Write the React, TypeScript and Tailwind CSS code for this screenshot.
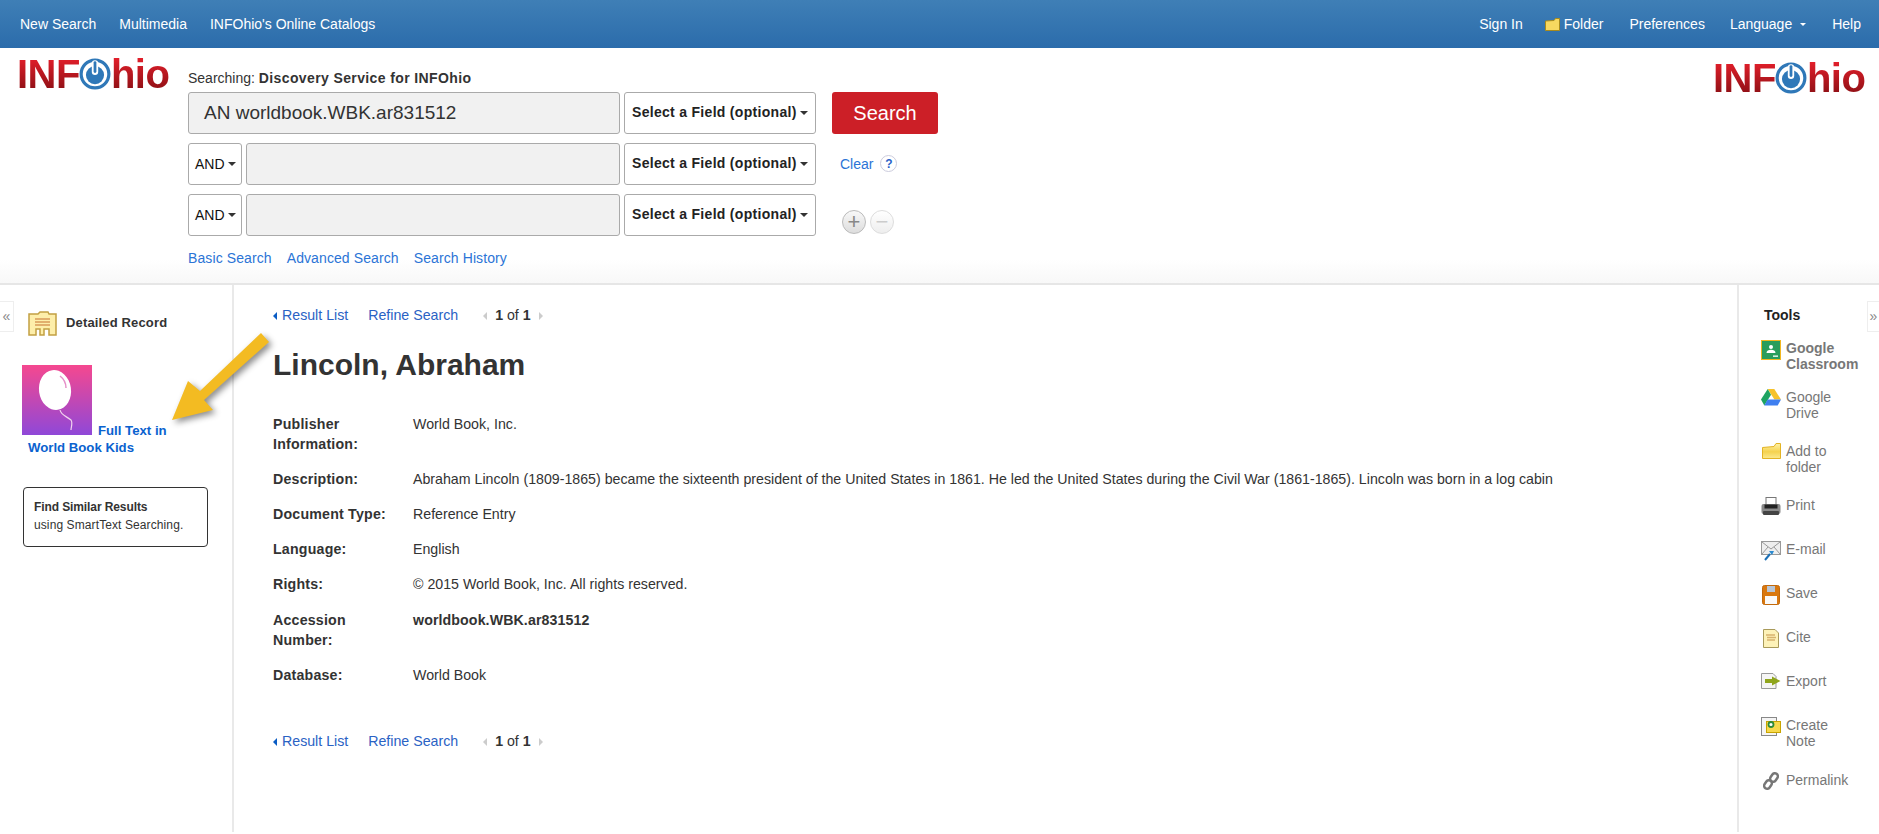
import React from 'react';

const Caret = ({ className = 'border-t-[#333]' }: { className?: string }) => (
  <span className={`inline-block w-0 h-0 border-x-[4px] border-t-[4px] border-x-transparent ${className}`} />
);

const Logo = () => (
  <div className="flex items-center h-[36px] w-[152px] text-[40px] leading-[36px] font-bold select-none">
    <span className="bg-linear-to-b from-[#e8202c] to-[#8a0f14] bg-clip-text text-transparent tracking-[-0.5px]">INF</span>
    <svg width="32" height="32" viewBox="0 0 30 30" className="shrink-0 -ml-[1px]">
      <circle cx="15" cy="15" r="13" fill="#fff" stroke="#2f78b8" strokeWidth="3" />
      <circle cx="15" cy="16" r="8.5" fill="#2f78b8" />
      <rect x="12" y="2" width="6" height="14" rx="3" fill="#fff" />
      <rect x="13.7" y="3" width="2.6" height="11" rx="1.3" fill="#2f78b8" />
    </svg>
    <span className="bg-linear-to-b from-[#e8202c] to-[#8a0f14] bg-clip-text text-transparent tracking-[-0.5px]">hio</span>
  </div>
);

const FieldSelect = () => (
  <button className="w-[192px] h-[42px] bg-white border border-[#aaa] rounded-[3px] flex items-center justify-between pl-[7px] pr-[7px] pb-[1px] text-[14px] tracking-[0.3px] font-bold text-[#222]">
    <span>Select a Field (optional)</span>
    <Caret />
  </button>
);

const AndSelect = () => (
  <button className="w-[54px] h-[42px] bg-white border border-[#aaa] rounded-[3px] flex items-center gap-[3px] pl-[6px] text-[14px] text-[#111]">
    <span>AND</span>
    <Caret />
  </button>
);

const TextBox = ({ value, wide }: { value?: string; wide?: boolean }) => (
  <div className={`${wide ? 'w-[432px] pl-[15px]' : 'w-[374px]'} h-[42px] bg-[#f1f1f1] border border-[#aaa] rounded-[3px] flex items-center text-[19px] text-[#333]`}>
    {value}
  </div>
);

const ResultNav = () => (
  <div className="flex items-center text-[14.2px] h-[20px]">
    <span className="inline-block w-0 h-0 border-y-[4px] border-r-[4px] border-y-transparent border-r-[#0a5cc4] mr-[5px]" />
    <a className="text-[#2a62c4]">Result List</a>
    <a className="text-[#2a62c4] ml-[20px]">Refine Search</a>
    <span className="inline-block w-0 h-0 border-y-[4px] border-r-[4px] border-y-transparent border-r-[#ccc] ml-[25px]" />
    <span className="ml-[8px] text-[#333]"><b>1</b> of <b>1</b></span>
    <span className="inline-block w-0 h-0 border-y-[4px] border-l-[4px] border-y-transparent border-l-[#ccc] ml-[8px]" />
  </div>
);

const details = [
  { label: ['Publisher', 'Information:'], value: 'World Book, Inc.', cls: 'mt-0' },
  {
    label: ['Description:'],
    value:
      'Abraham Lincoln (1809-1865) became the sixteenth president of the United States in 1861. He led the United States during the Civil War (1861-1865). Lincoln was born in a log cabin',
    cls: 'mt-[15px]',
  },
  { label: ['Document Type:'], value: 'Reference Entry', cls: 'mt-[15px]' },
  { label: ['Language:'], value: 'English', cls: 'mt-[15px]' },
  { label: ['Rights:'], value: '© 2015 World Book, Inc. All rights reserved.', cls: 'mt-[15px]' },
  { label: ['Accession', 'Number:'], value: 'worldbook.WBK.ar831512', bold: true, cls: 'mt-[16px]' },
  { label: ['Database:'], value: 'World Book', cls: 'mt-[15px]' },
];

const ClassroomIcon = () => (
  <svg width="20" height="20" viewBox="0 0 20 20">
    <rect x="0.5" y="0.5" width="19" height="19" fill="#2a9d5c" stroke="#f2b71f" />
    <circle cx="10" cy="7" r="2" fill="#fff" />
    <path d="M5.5 13c0-2.5 2-3.3 4.500-3.300s4.500.8 4.500 3.300z" fill="#fff" />
    <rect x="12" y="15.500" width="5" height="1.300" fill="#fff" />
  </svg>
);
const DriveIcon = () => (
  <svg width="20" height="17" viewBox="0 0 20 17">
    <path d="M6.700 0h6.600l6.700 10.500h-6.600z" fill="#f6c22c" />
    <path d="M6.700 0L0 10.500l3.300 6 6.700-10.800z" fill="#1ea362" />
    <path d="M6.600 10.500H20l-3.300 6H3.300z" fill="#3f7ff0" />
  </svg>
);
const FolderIcon = ({ w = 19, h = 16 }: { w?: number; h?: number }) => (
  <svg width={w} height={h} viewBox="0 0 19 16">
    <defs>
      <linearGradient id="fold" x1="0" y1="0" x2="0" y2="1">
        <stop offset="0" stopColor="#fff2a8" />
        <stop offset="0.55" stopColor="#f5d24e" />
        <stop offset="1" stopColor="#fbe98e" />
      </linearGradient>
    </defs>
    <path d="M.5 15.500V4.500L12 3.500 14 .5h4.500v15z" fill="url(#fold)" stroke="#e3b324" />
  </svg>
);
const PrintIcon = () => (
  <svg width="20" height="19" viewBox="0 0 20 19">
    <rect x="5" y="0.500" width="10" height="7" fill="#fff" stroke="#777" />
    <rect x="0.500" y="7" width="19" height="10" rx="2" fill="#8a8a8a" />
    <rect x="3.500" y="7.500" width="13" height="4" fill="#222" />
    <rect x="2" y="14" width="16" height="4" rx="1" fill="#444" />
  </svg>
);
const MailIcon = () => (
  <svg width="20" height="20" viewBox="0 0 20 20">
    <rect x="0.500" y="0.500" width="19" height="13" fill="#eee" stroke="#999" />
    <path d="M1 1l9 7 9-7M1 13l6-7M19 13l-6-7" fill="none" stroke="#999" />
    <path d="M4 19l5-6" stroke="#1b6fb5" strokeWidth="2" />
    <path d="M8 10l5 0-2 4z" fill="#2b8ad0" />
  </svg>
);
const SaveIcon = () => (
  <svg width="18" height="20" viewBox="0 0 18 20">
    <rect x="0.500" y="0.500" width="17" height="19" rx="2" fill="#d9780f" stroke="#c2690c" />
    <rect x="5" y="1" width="8" height="6" fill="#b9c6d6" />
    <rect x="3" y="11" width="12" height="8" fill="#fafafa" />
  </svg>
);
const CiteIcon = () => (
  <svg width="16" height="19" viewBox="0 0 16 19">
    <path d="M.5.500H12l3.500 3.500v14.500H.5z" fill="#fdf2b8" stroke="#a89a5a" />
    <path d="M3 6h9M4 8.500h9M4 11h8" stroke="#d8b36e" strokeWidth="1.500" />
  </svg>
);
const ExportIcon = () => (
  <svg width="20" height="16" viewBox="0 0 20 16">
    <path d="M.5.500H12l3 3v12H.5z" fill="#f5f5f5" stroke="#999" />
    <path d="M4 6h7V3.500L19.500 8 11 12.500V10H4z" fill="#8fa51c" />
  </svg>
);
const NoteIcon = () => (
  <svg width="20" height="19" viewBox="0 0 20 19">
    <rect x="0.500" y="0.500" width="15" height="18" fill="#f5f5f5" stroke="#888" />
    <rect x="5.500" y="4.500" width="14" height="11" fill="#f7d94c" stroke="#c9a400" />
    <circle cx="10" cy="7.500" r="2.500" fill="#fff" stroke="#2c8a3a" strokeWidth="1.800" />
  </svg>
);
const LinkIcon = () => (
  <svg width="16" height="18" viewBox="0 0 16 18" fill="none" stroke="#777" strokeWidth="2.500">
    <rect x="8" y="1" width="6" height="9" rx="3" transform="rotate(35 11 5.500)" />
    <rect x="2" y="8" width="6" height="9" rx="3" transform="rotate(35 5 12.500)" />
  </svg>
);

const tools = [
  { icon: <ClassroomIcon />, lines: ['Google', 'Classroom'], cls: 'mt-[15px] font-bold' },
  { icon: <DriveIcon />, lines: ['Google', 'Drive'], cls: 'mt-[17px]' },
  { icon: <FolderIcon />, lines: ['Add to', 'folder'], cls: 'mt-[22px]' },
  { icon: <PrintIcon />, lines: ['Print'], cls: 'mt-[22px]' },
  { icon: <MailIcon />, lines: ['E-mail'], cls: 'mt-[28px]' },
  { icon: <SaveIcon />, lines: ['Save'], cls: 'mt-[28px]' },
  { icon: <CiteIcon />, lines: ['Cite'], cls: 'mt-[28px]' },
  { icon: <ExportIcon />, lines: ['Export'], cls: 'mt-[28px]' },
  { icon: <NoteIcon />, lines: ['Create', 'Note'], cls: 'mt-[28px]' },
  { icon: <LinkIcon />, lines: ['Permalink'], cls: 'mt-[23px]' },
];

const App: React.FC = () => {
  return (
    <div className="relative w-[1879px] h-[834px] overflow-hidden bg-white text-[14px] font-['Liberation_Sans',Arial,sans-serif]">
      {/* top bar */}
      <div className="h-[48px] bg-linear-to-b from-[#3f7fb6] to-[#2b6cab] flex items-center justify-between pl-[20px] pr-[18px] text-white text-[14px]">
        <div className="flex gap-[23px]">
          <a>New Search</a>
          <a>Multimedia</a>
          <a>INFOhio's Online Catalogs</a>
        </div>
        <div className="flex items-center gap-[24px]">
          <a className="-mr-[2px]">Sign In</a>
          <a className="flex items-center gap-[4px] mr-[2px]">
            <svg width="15" height="13" viewBox="0 0 15 13">
              <path d="M.5 12.500V3L9 2.500 10.500.5h4v12z" fill="#f6d860" stroke="#a88a1c" />
            </svg>
            Folder
          </a>
          <a className="mr-[1px]">Preferences</a>
          <a className="flex items-center gap-[8px] mr-[2px]">
            Language
            <span className="inline-block w-0 h-0 border-x-[3px] border-t-[3px] border-x-transparent border-t-white" />
          </a>
          <a>Help</a>
        </div>
      </div>

      {/* search header */}
      <div className="h-[237px] flex bg-linear-to-b from-white from-[90%] to-[#f8f8f8] border-b-2 border-[#e6e6e6]">
        <div className="w-[188px] shrink-0 pl-[17px] pt-[8px]">
          <Logo />
        </div>
        <div className="pt-[20px]">
          <div className="text-[14px] leading-[20px] text-[#333] h-[24px]">
            Searching: <b className="tracking-[0.38px]">Discovery Service for INFOhio</b>
          </div>
          <div className="flex">
            <div className="flex flex-col gap-[9px]">
              <div className="flex gap-[4px]">
                <TextBox value="AN worldbook.WBK.ar831512" wide />
                <FieldSelect />
              </div>
              <div className="flex gap-[4px]">
                <AndSelect />
                <TextBox />
                <FieldSelect />
              </div>
              <div className="flex gap-[4px]">
                <AndSelect />
                <TextBox />
                <FieldSelect />
              </div>
            </div>
            <div className="ml-[16px] flex flex-col">
              <button className="w-[106px] h-[42px] bg-[#cc1f27] rounded-[3px] text-white text-[20px]">Search</button>
              <div className="mt-[20px] ml-[8px] flex items-center gap-[7px] text-[14px] text-[#2b74d6]">
                <a>Clear</a>
                <span className="w-[17px] h-[17px] rounded-full border border-[#ccd] text-[12px] font-bold text-[#2b62c8] flex items-center justify-center -mt-[2px]">?</span>
              </div>
              <div className="mt-[35px] ml-[10px] flex gap-[4px]">
                <span className="w-[24px] h-[24px] rounded-full border border-[#bbb] bg-linear-to-b from-[#f8f8f8] to-[#ddd] text-[#888] text-[22px] leading-[20px] flex items-center justify-center">+</span>
                <span className="w-[24px] h-[24px] rounded-full border border-[#ddd] bg-linear-to-b from-white to-[#eee] text-[#ccc] text-[22px] leading-[20px] flex items-center justify-center">−</span>
              </div>
            </div>
          </div>
          <div className="mt-[12px] flex gap-[15px] text-[14px] tracking-[0.1px] text-[#2b74d6]">
            <a>Basic Search</a>
            <a>Advanced Search</a>
            <a>Search History</a>
          </div>
        </div>
        <div className="ml-auto pt-[12px] pr-[14px]">
          <Logo />
        </div>
      </div>

      {/* body */}
      <div className="flex h-[547px]">
        <aside className="w-[234px] shrink-0 border-r-2 border-[#e9e9e9]">
          <div className="flex items-center h-[26px] mt-[25px] ml-[28px]">
            <svg width="29" height="25" viewBox="0 0 29 25">
              <path d="M1 24V3h9l2-2h8l1 2h7v21h-7v-6h-5v6h-4v-6H8v6z" fill="#fdeeaa" stroke="#c2a043" strokeWidth="1.500" />
              <path d="M7 8h15M7 11h15M7 14h15" stroke="#d79a5a" strokeWidth="1.500" />
            </svg>
            <span className="ml-[9px] text-[13px] tracking-[0.15px] font-bold text-[#333]">Detailed Record</span>
          </div>
          <div className="mt-[29px] ml-[28px] w-[190px] text-[13.2px] leading-[17px] font-bold text-[#0a62cf]">
            <svg width="70" height="70" viewBox="0 0 70 70" className="inline align-baseline -ml-[6px]">
              <defs>
                <linearGradient id="bal" x1="0" y1="0" x2="0" y2="1">
                  <stop offset="0" stopColor="#f5488f" />
                  <stop offset="1" stopColor="#8f48d8" />
                </linearGradient>
              </defs>
              <rect width="70" height="70" fill="url(#bal)" />
              <ellipse cx="33" cy="25" rx="16" ry="20" transform="rotate(-8 33 25)" fill="#fff" />
              <path d="M38 11c4 3 6 7 6 12" fill="none" stroke="#e58fc8" strokeWidth="1.500" />
              <path d="M38 45c1 5 6 6 11 10 2 3 0 7 0 10" fill="none" stroke="#f1d4ee" strokeWidth="1.200" />
            </svg>
            <span className="ml-[6px]">Full Text in</span>
            <br />
            World Book Kids
          </div>
          <div className="mt-[31px] ml-[23px] w-[185px] h-[60px] border border-[#333] rounded-[4px] pl-[10px] pt-[10px] text-[12px] leading-[18px] text-[#333]">
            <b className="tracking-[-0.1px]">Find Similar Results</b>
            <br />
            <span className="tracking-[0.1px]">using SmartText Searching.</span>
          </div>
        </aside>

        <main className="flex-1 pl-[39px] pt-[21px]">
          <ResultNav />
          <h1 className="mt-[21px] text-[30px] leading-[36px] font-bold text-[#333]">Lincoln, Abraham</h1>
          <div className="mt-[31px] text-[14.2px] leading-[20px] text-[#333]">
            {details.map(d => (
              <div key={d.label[0]} className={`flex ${d.cls}`}>
                <div className="w-[140px] shrink-0 font-bold tracking-[0.2px]">
                  {d.label.map(l => (
                    <div key={l}>{l}</div>
                  ))}
                </div>
                <div className={d.bold ? 'font-bold tracking-[0.1px]' : ''}>{d.value}</div>
              </div>
            ))}
          </div>
          <div className="mt-[47px]">
            <ResultNav />
          </div>
        </main>

        <aside className="w-[142px] shrink-0 border-l-2 border-[#e9e9e9] pl-[22px] pt-[20px]">
          <div className="text-[14px] leading-[20px] font-bold text-[#222] ml-[3px]">Tools</div>
          <div className="text-[14px] leading-[16px] text-[#777]">
            {tools.map(t => (
              <div key={t.lines[0] + t.lines.length} className={`flex ${t.cls}`}>
                <div className="w-[20px] h-[16px] mr-[5px] shrink-0 flex justify-center items-start">{t.icon}</div>
                <div>
                  {t.lines.map(l => (
                    <div key={l}>{l}</div>
                  ))}
                </div>
              </div>
            ))}
          </div>
        </aside>
      </div>

      {/* collapse tabs */}
      <div className="absolute left-0 top-[301px] w-[14px] h-[31px] border border-l-0 border-[#eee] bg-white text-[#888] text-[14px] leading-[28px] text-center">«</div>
      <div className="absolute right-0 top-[301px] w-[12px] h-[31px] border border-r-0 border-[#eee] bg-white text-[#888] text-[14px] leading-[28px] text-center">»</div>

      {/* arrow annotation */}
      <svg className="absolute left-[160px] top-[325px] drop-shadow-[3px_3px_3px_rgba(0,0,0,0.45)]" width="120" height="105" viewBox="0 0 120 105">
        <path d="M12 95L28 56 40 66 101 8 109 17 44 75 53 85z" fill="#f3bb22" />
      </svg>
    </div>
  );
};

export default App;
